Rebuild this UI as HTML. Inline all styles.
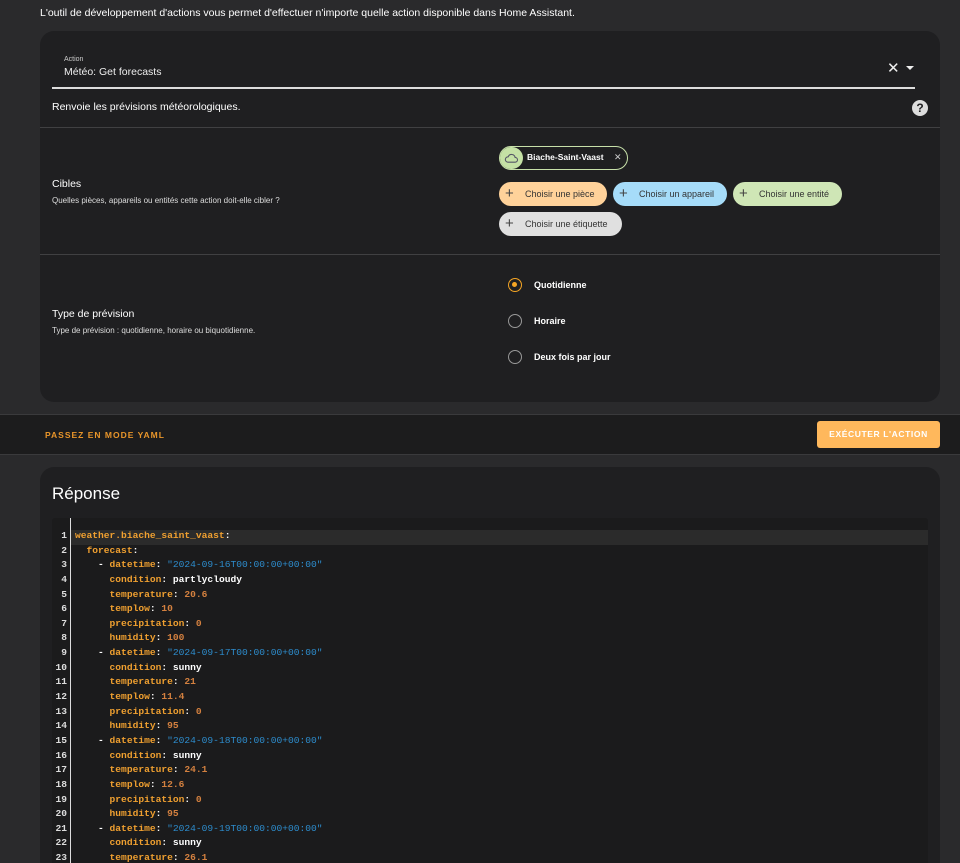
<!DOCTYPE html>
<html><head><meta charset="utf-8"><style>
*{box-sizing:border-box;margin:0;padding:0}
html,body{width:960px;height:863px;overflow:hidden}
body{background:#2a2a2c;font-family:"Liberation Sans",sans-serif;color:#e8e8e8;position:relative}
.abs{position:absolute}
.card{position:absolute;left:40px;width:900px;background:#1f1f21;border-radius:14px;overflow:hidden}
.hr{position:absolute;left:0;right:0;height:1px;background:#404042}
.chip{position:absolute;height:24px;border-radius:12px;font-size:9px;color:#333;line-height:24px;padding-left:26px}
.chip:before{content:"+";position:absolute;left:6px;top:0;font-size:15px;color:#444;font-weight:300}
.radio{position:absolute;left:508px;width:14px;height:14px;border:1.5px solid #999;border-radius:50%}
.rl{position:absolute;left:534px;font-size:9px;font-weight:bold;color:#fff}
pre{font-family:"Liberation Mono",monospace;font-size:9.6px;line-height:14.64px;white-space:pre;font-weight:bold}
.k{color:#f0a030}.s{color:#2d8ccc;font-weight:normal}.n{color:#d3803f}.w{color:#fff}
</style></head><body>
<div class="abs" style="left:40px;top:7px;font-size:10.5px;color:#fff">L'outil de développement d'actions vous permet d'effectuer n'importe quelle action disponible dans Home Assistant.</div>

<div class="card" style="top:31px;height:371px">
  <div class="abs" style="left:24px;top:25px;font-size:7px;color:#ccc">Action</div>
  <div class="abs" style="left:24px;top:35px;font-size:10.5px;color:#eee">Météo: Get forecasts</div>
  <div class="abs" style="left:12px;top:56px;width:863px;height:1.5px;background:#ddd"></div>
  <div class="abs" style="left:847px;top:28px;font-size:15px;color:#eee">✕</div>
  <div class="abs" style="left:866px;top:35px;width:0;height:0;border-left:4px solid transparent;border-right:4px solid transparent;border-top:4px solid #eee"></div>
  <div class="abs" style="left:12px;top:70px;font-size:10.5px;color:#fff">Renvoie les prévisions météorologiques.</div>
  <div class="abs" style="left:872px;top:69px;width:16px;height:16px;border-radius:50%;background:#ddd;color:#1f1f21;font-size:12px;font-weight:bold;text-align:center;line-height:16px">?</div>
  <div class="hr" style="top:96px"></div>
  <div class="abs" style="left:12px;top:147px;font-size:10.5px;color:#fff">Cibles</div>
  <div class="abs" style="left:12px;top:165px;font-size:8px;color:#ddd">Quelles pièces, appareils ou entités cette action doit-elle cibler ?</div>
  <div class="abs" style="left:459px;top:115px;width:129px;height:24px;border:1px solid #c7e0a9;border-radius:12px">
    <div class="abs" style="left:0;top:0;width:23px;height:22px;border-radius:11px;background:#c5e1a5"></div>
    <svg class="abs" style="left:4px;top:5px" width="15" height="12" viewBox="0 0 24 20"><path d="M6 17h12a4 4 0 0 0 0-8 6 6 0 0 0-11.5-1A4.5 4.5 0 0 0 6 17z" fill="none" stroke="#556" stroke-width="1.8"/></svg>
    <div class="abs" style="left:27px;top:5px;font-size:8.5px;font-weight:bold;color:#fff">Biache-Saint-Vaast</div>
    <div class="abs" style="left:114px;top:5px;font-size:9px;color:#ccc">✕</div>
  </div>
  <div class="chip" style="left:459px;top:151px;width:108px;background:#ffd29a">Choisir une pièce</div>
  <div class="chip" style="left:573px;top:151px;width:114px;background:#a6dcf9">Choisir un appareil</div>
  <div class="chip" style="left:693px;top:151px;width:109px;background:#cfe6b6">Choisir une entité</div>
  <div class="chip" style="left:459px;top:181px;width:123px;background:#e0e0e0">Choisir une étiquette</div>
  <div class="hr" style="top:223px"></div>
  <div class="abs" style="left:12px;top:277px;font-size:10.5px;color:#fff">Type de prévision</div>
  <div class="abs" style="left:12px;top:295px;font-size:8px;color:#ddd">Type de prévision : quotidienne, horaire ou biquotidienne.</div>
</div>
<div class="radio" style="top:278px;border-color:#f5a524"><div style="position:absolute;left:3px;top:3px;width:5px;height:5px;border-radius:50%;background:#f5a524"></div></div>
<div class="rl" style="top:280px">Quotidienne</div>
<div class="radio" style="top:314px"></div><div class="rl" style="top:316px">Horaire</div>
<div class="radio" style="top:350px"></div><div class="rl" style="top:352px">Deux fois par jour</div>

<div class="abs" style="left:0;top:414px;width:960px;height:41px;background:#1c1c1d;border-top:1px solid #3a3a3c;border-bottom:1px solid #3a3a3c"></div>
<div class="abs" style="left:45px;top:430px;font-size:8.5px;font-weight:bold;letter-spacing:1px;color:#e8952a">PASSEZ EN MODE YAML</div>
<div class="abs" style="left:817px;top:421px;width:123px;height:27px;border-radius:3px;background:#ffb85c;color:#fff;font-size:8.5px;font-weight:bold;letter-spacing:.6px;text-align:center;line-height:27px">EXÉCUTER L'ACTION</div>

<div class="card" style="top:467px;height:396px;border-radius:14px 14px 0 0">
  <div class="abs" style="left:12px;top:17px;font-size:17px;color:#fff">Réponse</div>
  <div class="abs" style="left:12px;top:51px;width:876px;height:360px;background:#1b1b1c;border-radius:3px"></div>
  <div class="abs" style="left:30px;top:63px;width:858px;height:15px;background:#2b2b2b"></div>
  <div class="abs" style="left:30px;top:51px;width:1px;height:360px;background:#ddd"></div>
  <pre class="abs" style="left:10px;top:62px;width:17px;text-align:right;color:#ddd">1
2
3
4
5
6
7
8
9
10
11
12
13
14
15
16
17
18
19
20
21
22
23</pre>
  <pre class="abs" style="left:35px;top:62px"><span class="k">weather.biache_saint_vaast</span><span class="w">:</span>
  <span class="k">forecast</span><span class="w">:</span>
    <span class="w">- </span><span class="k">datetime</span><span class="w">: </span><span class="s">"2024-09-16T00:00:00+00:00"</span>
      <span class="k">condition</span><span class="w">: partlycloudy</span>
      <span class="k">temperature</span><span class="w">: </span><span class="n">20.6</span>
      <span class="k">templow</span><span class="w">: </span><span class="n">10</span>
      <span class="k">precipitation</span><span class="w">: </span><span class="n">0</span>
      <span class="k">humidity</span><span class="w">: </span><span class="n">100</span>
    <span class="w">- </span><span class="k">datetime</span><span class="w">: </span><span class="s">"2024-09-17T00:00:00+00:00"</span>
      <span class="k">condition</span><span class="w">: sunny</span>
      <span class="k">temperature</span><span class="w">: </span><span class="n">21</span>
      <span class="k">templow</span><span class="w">: </span><span class="n">11.4</span>
      <span class="k">precipitation</span><span class="w">: </span><span class="n">0</span>
      <span class="k">humidity</span><span class="w">: </span><span class="n">95</span>
    <span class="w">- </span><span class="k">datetime</span><span class="w">: </span><span class="s">"2024-09-18T00:00:00+00:00"</span>
      <span class="k">condition</span><span class="w">: sunny</span>
      <span class="k">temperature</span><span class="w">: </span><span class="n">24.1</span>
      <span class="k">templow</span><span class="w">: </span><span class="n">12.6</span>
      <span class="k">precipitation</span><span class="w">: </span><span class="n">0</span>
      <span class="k">humidity</span><span class="w">: </span><span class="n">95</span>
    <span class="w">- </span><span class="k">datetime</span><span class="w">: </span><span class="s">"2024-09-19T00:00:00+00:00"</span>
      <span class="k">condition</span><span class="w">: sunny</span>
      <span class="k">temperature</span><span class="w">: </span><span class="n">26.1</span></pre>
</div>
</body></html>
